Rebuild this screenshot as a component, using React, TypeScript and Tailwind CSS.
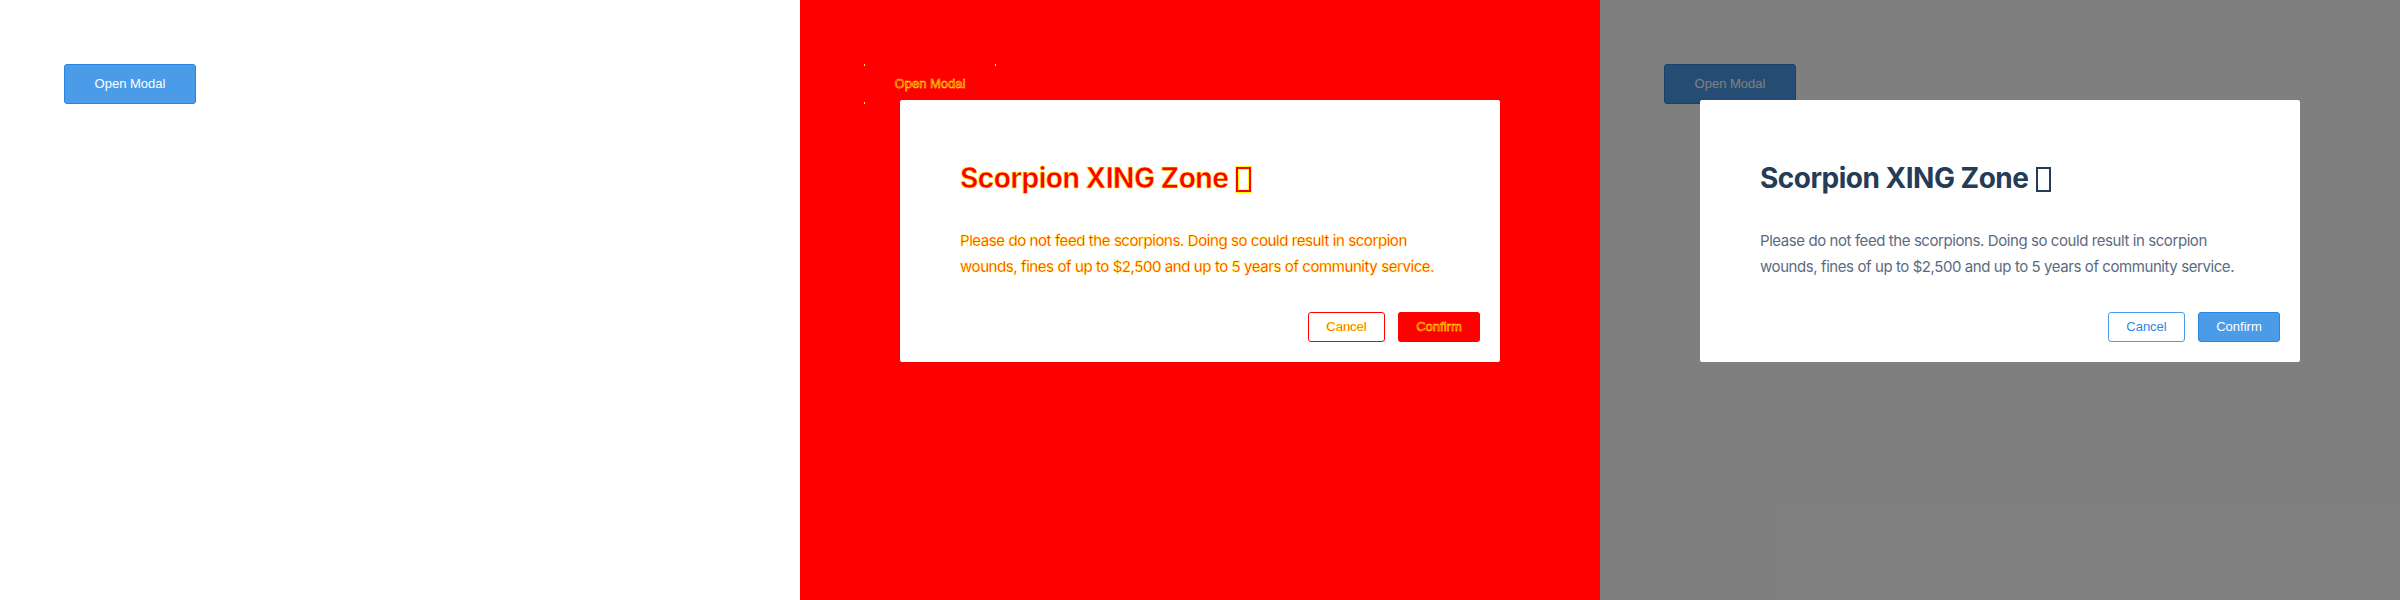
import React from "react";

const sans = "font-['Liberation_Sans',Arial,sans-serif]";
const inter = "font-['Inter','Noto_Sans',sans-serif]";
const stroke = "[-webkit-text-stroke:0.5px_#ffff00]";
const strokeThin = "[-webkit-text-stroke:0.4px_#ffff00]";

function Tofu({ diff }: { diff?: boolean }) {
  return (
    <span
      className={`ml-[1px] inline-block h-[25px] w-[15px] border-2 align-[-4px] ${
        diff ? "border-[#ff0000] shadow-[0_0_0_1px_#ffff00,inset_0_0_0_1px_#ffff00]" : "border-[#243c58]"
      }`}
    />
  );
}

function OpenButton({ variant }: { variant: "normal" | "dim" | "diff" }) {
  if (variant === "diff") {
    return (
      <button
        className={`${sans} relative h-[40px] w-[132px] rounded-[3px] bg-[#ff0000] text-[13px] text-[#ff0000] ${stroke}`}
      >
        Open Modal
        <span className="absolute left-0 top-0 h-[2px] w-[1px] bg-[#ffff00]" />
        <span className="absolute right-0 top-0 h-[2px] w-[1px] bg-[#ffff00]" />
        <span className="absolute bottom-0 left-0 h-[2px] w-[1px] bg-[#ffff00]" />
      </button>
    );
  }
  const cls =
    variant === "normal"
      ? "bg-[#4a9be8] border-[#2a85de] text-white"
      : "bg-[#254e75] border-[#15426f] text-[#6f7f91]";
  return (
    <button
      className={`${sans} h-[40px] w-[132px] rounded-[3px] border text-[13px] ${cls}`}
    >
      Open Modal
    </button>
  );
}

function Modal({ diff }: { diff?: boolean }) {
  const titleCls = diff ? `text-[#ff0000] ${stroke}` : "text-[#243c58]";
  const bodyCls = diff ? `text-[#ff0000] ${strokeThin}` : "text-[#5b6b80]";
  return (
    <div className="w-[600px] rounded-[2px] bg-white">
      <div className="px-[60px] pb-[31px] pt-[62px]">
        <h2
          className={`${inter} text-[28px] font-bold leading-[1.2] tracking-[-0.5px] ${titleCls}`}
        >
          Scorpion XING Zone <Tofu diff={diff} />
        </h2>
        <p
          className={`${inter} mt-[32px] text-[15px] leading-[26.7px] tracking-[-0.42px] ${bodyCls}`}
        >
          Please do not feed the scorpions. Doing so could result in scorpion
          wounds, fines of up to $2,500 and up to 5 years of community service.
        </p>
      </div>
      <div className="flex justify-end gap-[13px] px-[20px] pb-[20px]">
        {diff ? (
          <>
            <button
              className={`${sans} h-[30px] w-[77px] rounded-[3px] border border-[#ff0000] bg-white text-[13px] text-[#ff0000] ${strokeThin}`}
            >
              Cancel
            </button>
            <button
              className={`${sans} h-[30px] w-[82px] rounded-[3px] bg-[#ff0000] text-[13px] text-[#ff0000] ${stroke}`}
            >
              Confirm
            </button>
          </>
        ) : (
          <>
            <button
              className={`${sans} h-[30px] w-[77px] rounded-[3px] border border-[#4a9be8] bg-white text-[13px] text-[#2d86e0]`}
            >
              Cancel
            </button>
            <button
              className={`${sans} h-[30px] w-[82px] rounded-[3px] border border-[#2a85de] bg-[#4a9be8] text-[13px] text-white`}
            >
              Confirm
            </button>
          </>
        )}
      </div>
    </div>
  );
}

export default function App() {
  return (
    <div className="flex h-[600px] w-[2400px] overflow-hidden">
      <div className="h-[600px] w-[800px] bg-white p-[64px]">
        <OpenButton variant="normal" />
      </div>
      <div className="relative h-[600px] w-[800px] bg-[#ff0000] p-[64px]">
        <OpenButton variant="diff" />
        <div className="absolute inset-0 flex items-start justify-center pt-[100px]">
          <Modal diff />
        </div>
      </div>
      <div className="relative h-[600px] w-[800px] bg-white p-[64px]">
        <OpenButton variant="normal" />
        <div className="absolute inset-0 flex items-start justify-center bg-black/50 pt-[100px]">
          <Modal />
        </div>
      </div>
    </div>
  );
}
